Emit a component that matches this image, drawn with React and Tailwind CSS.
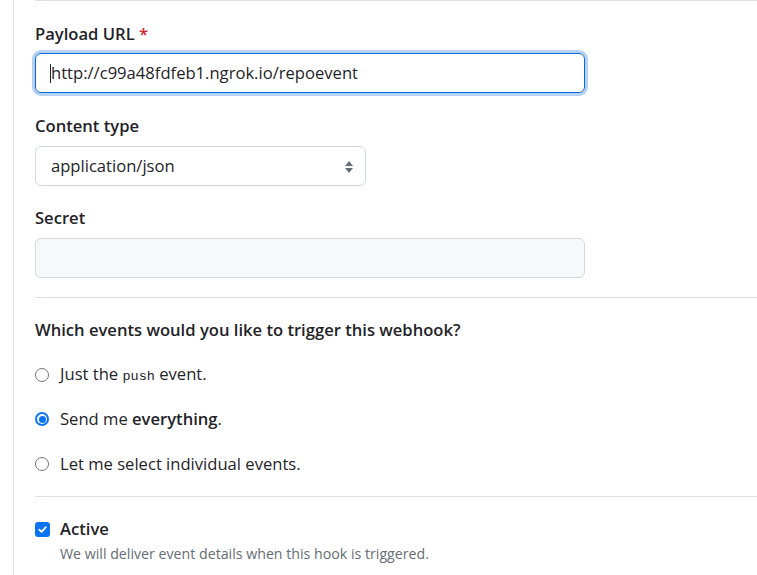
import React from "react";

function SelectArrows() {
  return (
    <svg width="10" height="14" viewBox="0 0 10 14" className="absolute right-[11px] top-[13px]">
      <path d="M5 1 L9 6 H1 Z" fill="#656d76" />
      <path d="M5 13 L9 8 H1 Z" fill="#656d76" />
    </svg>
  );
}

function Radio({ checked }) {
  if (checked) {
    return (
      <span className="w-[14px] h-[14px] rounded-full bg-[#0a74f5] flex items-center justify-center shrink-0">
        <span className="w-[10px] h-[10px] rounded-full bg-white flex items-center justify-center">
          <span className="w-[7px] h-[7px] rounded-full bg-[#0a74f5]" />
        </span>
      </span>
    );
  }
  return <span className="w-[14px] h-[14px] rounded-full border border-[#767676] bg-white shrink-0" />;
}

export default function App() {
  return (
    <div className="w-[757px] h-[575px] overflow-hidden bg-white text-[#1f2328] font-['Segoe_UI','Open_Sans','Noto_Sans',sans-serif]">
      <div className="ml-[13px] h-full border-l border-[#e1e4e8] pl-[21px]">
        <div className="border-t border-[#d8dee4] pt-[21px]">
          <div className="text-[16.6px] leading-[24px] font-semibold">
            Payload URL <span className="text-[#d1242f]">*</span>
          </div>
          <div className="mt-[7px] w-[550px] h-[40px] rounded-[6px] border border-[#0969da] shadow-[0_0_0_3px_rgba(9,105,218,0.3)] flex items-center pl-[15px] text-[16.6px]">
            <span className="w-px h-[19px] bg-[#1f2328] -ml-[1px]" />
            <span>http://c99a48fdfeb1.ngrok.io/repoevent</span>
          </div>

          <div className="mt-[21px] text-[16.6px] leading-[24px] font-semibold">Content type</div>
          <div className="relative mt-[8px] w-[331px] h-[40px] rounded-[6px] border border-[#d1d9e0] flex items-center pl-[15px] text-[16.6px]">
            application/json
            <SelectArrows />
          </div>

          <div className="mt-[20px] text-[16.6px] leading-[24px] font-semibold">Secret</div>
          <div className="mt-[8px] w-[550px] h-[40px] rounded-[6px] border border-[#d1d9e0] bg-[#f6f8fa]" />

          <div className="mt-[19px] border-t border-[#d8dee4]" />

          <div className="mt-[20px] text-[16.6px] leading-[24px] font-semibold">
            Which events would you like to trigger this webhook?
          </div>

          <div className="mt-[21px] flex items-center gap-[11px] h-[24px] text-[16.6px]">
            <Radio />
            <span>
              Just the <code className="font-['Consolas','Liberation_Mono',monospace] text-[13.5px]">push</code> event.
            </span>
          </div>
          <div className="mt-[20px] flex items-center gap-[11px] h-[24px] text-[16.6px]">
            <Radio checked />
            <span>
              Send me <strong className="font-semibold">everything</strong>.
            </span>
          </div>
          <div className="mt-[21px] flex items-center gap-[11px] h-[24px] text-[16.6px]">
            <Radio />
            <span>Let me select individual events.</span>
          </div>

          <div className="mt-[20px] border-t border-[#d8dee4]" />

          <div className="mt-[20px] flex items-center gap-[10px] h-[24px]">
            <span className="w-[15px] h-[15px] rounded-[3px] bg-[#0a74f5] flex items-center justify-center shrink-0">
              <svg width="11" height="11" viewBox="0 0 12 12">
                <path d="M2.5 6.2 L5 8.6 L9.6 3.4" stroke="white" strokeWidth="2" fill="none" strokeLinecap="round" strokeLinejoin="round" />
              </svg>
            </span>
            <span className="text-[16.6px] font-semibold">Active</span>
          </div>
          <div className="mt-[3px] pl-[25px] text-[14.2px] leading-[20px] text-[#656d76]">
            We will deliver event details when this hook is triggered.
          </div>
        </div>
      </div>
    </div>
  );
}
